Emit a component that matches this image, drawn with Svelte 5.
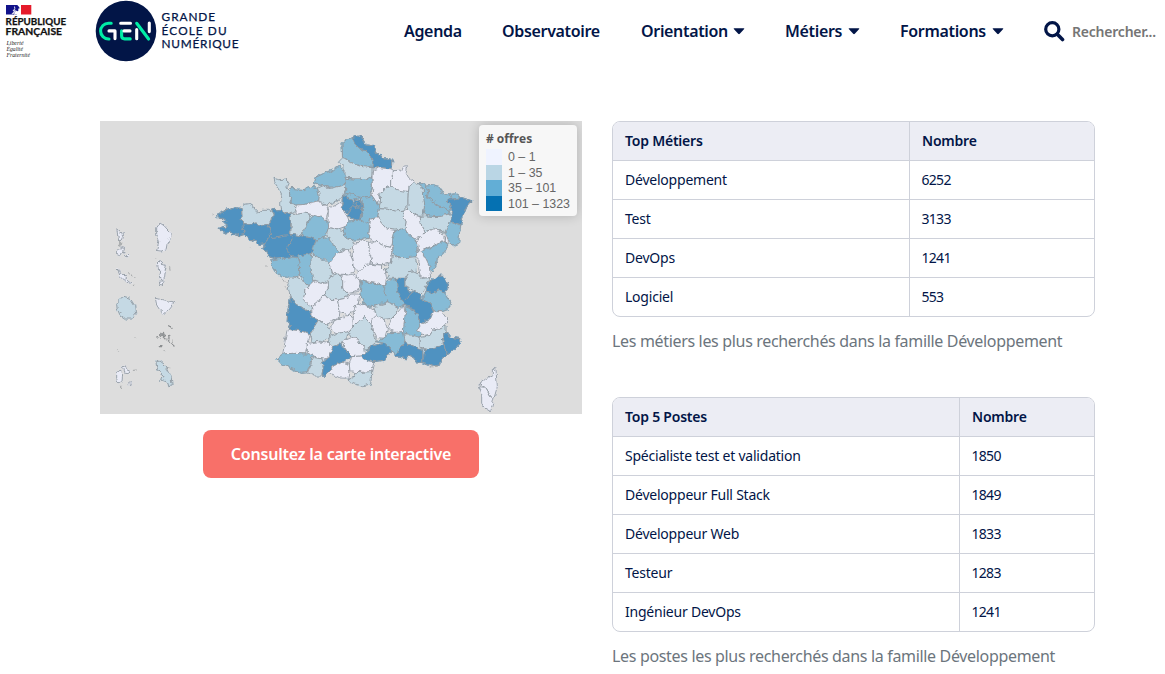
<script>
  const nav = [
    { label: 'Agenda', width: 58 },
    { label: 'Observatoire', width: 99 },
    { label: 'Orientation', width: 104, menu: true },
    { label: 'Métiers', width: 75, menu: true },
    { label: 'Formations', width: 104, menu: true }
  ];

  const tables = [
    {
      title: 'Top Métiers',
      first: 297,
      rows: [['Développement', '6252'], ['Test', '3133'], ['DevOps', '1241'], ['Logiciel', '553']],
      caption: 'Les métiers les plus recherchés dans la famille Développement'
    },
    {
      title: 'Top 5 Postes',
      first: 347,
      rows: [
        ['Spécialiste test et validation', '1850'],
        ['Développeur Full Stack', '1849'],
        ['Développeur Web', '1833'],
        ['Testeur', '1283'],
        ['Ingénieur DevOps', '1241']
      ],
      caption: 'Les postes les plus recherchés dans la famille Développement'
    }
  ];

  const legend = [
    ['#eff3ff', '0 – 1'],
    ['#bad6e5', '1 – 35'],
    ['#62aed6', '35 – 101'],
    ['#0571b2', '101 – 1323']
  ];

  const fills = { d: '#4f92c1', m: '#86bbd6', l: '#c5d9e4', p: '#e9ebf6' };

  // Department outlines, grouped by map sector. Each sector has its own origin.
  const sectors = [
    { ox: 330, oy: 12, shapes: `
d 23,267 35,262 48,256 62,252 78,248 95,252 96,275 98,295 103,302 98,310 104,328 88,332 70,328 62,318 52,326 40,320 28,310 40,305 54,304 44,296 38,290 52,288 56,282 40,280 26,280
l 95,246 105,238 122,235 132,250 146,264 160,256 176,256 190,264 188,280 178,288 172,298 155,302 138,294 120,298 98,294
d 98,302 120,298 138,295 156,302 172,299 180,315 182,338 165,356 148,358 138,348 120,346 110,334 98,325
d 186,254 195,250 200,258 215,256 225,265 240,268 244,290 240,310 242,328 225,334 205,338 182,338 180,315 172,298 190,282 190,265
d 165,356 182,338 215,332 240,330 246,345 232,370 243,382 236,400 215,400 210,408 195,400 180,396 170,378 158,370
l 192,160 205,164 232,162 234,176 228,188 238,200 242,215 240,235 250,243 260,250 254,262 246,270 226,264 215,252 212,235 216,210 206,190 196,176
m 240,190 260,192 285,194 310,184 322,190 328,212 326,228 305,232 285,238 262,240 244,238 242,218 238,200
p 256,250 262,240 285,238 305,230 326,226 335,238 350,242 355,256 350,275 354,288 342,286 330,276 310,270 290,265 262,268
l 244,270 262,268 280,264 298,268 300,280 292,300 282,320 276,334 258,330 240,328 244,300
m 300,282 310,270 330,276 348,288 356,305 350,325 340,338 318,345 300,338 280,330 284,308 294,295
d 242,332 260,330 278,335 300,340 317,346 312,365 305,385 290,392 262,394 240,392 234,372 246,345
m 310,175 315,158 340,146 370,135 385,124 402,136 408,160 406,178 402,184 380,186 355,186 330,180
l 325,185 340,182 362,190 380,186 402,182 407,196 404,204 398,212 385,222 380,232 362,235 345,236 330,225 326,205
p 352,262 358,248 375,242 390,232 396,245 402,260 412,275 416,288 405,305 385,312 362,305 352,285
l 358,308 385,312 400,318 406,334 412,342 428,345 432,365 415,375 395,374 385,380 370,365 365,345 352,335 352,318
m 318,346 340,338 358,342 368,352 372,368 382,376 380,390 368,400 358,412 352,420 335,405 322,395 308,388 312,368` },
    { ox: 720, oy: 12, shapes: `
m 6,52 20,42 38,38 46,58 60,72 78,78 92,92 98,112 96,128 80,128 62,124 45,118 28,108 8,98
d 38,40 52,34 66,32 68,46 76,60 80,66 92,62 104,66 106,84 120,88 128,102 150,102 158,110 156,132 140,130 120,128 98,130 96,112 90,90 76,78 60,74 46,62
l 5,104 20,106 40,114 62,124 98,130 96,156 80,166 60,162 40,162 18,160 12,148 12,124 -5,112
m 18,162 40,162 60,164 80,166 94,160 96,178 90,198 96,212 75,216 45,212 20,206 16,190
p 98,136 120,132 152,134 160,140 160,158 152,165 152,184 132,192 120,208 122,228 112,236 100,214 98,190 96,160
p 160,140 182,138 188,124 200,122 196,140 206,158 222,170 208,182 205,200 190,200 170,194 152,184 152,165 160,158
l 122,205 132,192 152,188 175,194 203,200 204,220 204,240 190,256 165,258 140,250 118,248 122,228
l 206,180 224,172 240,180 250,190 252,215 254,240 250,265 240,275 222,270 204,252 204,240 208,225 204,205
m 232,176 250,176 258,184 266,200 262,215 280,232 300,245 325,256 328,266 305,274 280,275 255,272 250,262 254,235 250,205 250,190
m 258,178 280,180 296,184 304,202 325,210 340,222 322,232 334,245 325,258 300,245 278,230 264,212 266,198
m 328,210 345,206 358,212 356,222 340,222
d 324,222 345,218 365,218 395,228 380,245 368,275 362,300 345,295 328,288 338,262 332,245 320,232
m 330,290 345,296 360,302 358,330 356,355 340,362 325,345 316,325 322,305
l 240,280 255,272 280,275 305,274 328,268 335,275 328,300 318,320 300,315 280,312 255,320 245,305
p 315,332 326,345 324,358 312,350
p 190,256 204,252 222,270 240,278 246,300 255,320 240,338 222,342 208,330 195,310 198,290 190,275
l 118,250 140,250 165,258 190,262 190,278 198,292 190,308 165,316 140,312 125,295 112,278
m 66,218 96,212 108,232 118,250 112,275 92,282 88,298 65,296 62,270 68,250
m 5,208 30,206 66,214 66,224 40,226 20,216
d 2,216 25,220 42,226 40,240 30,262 20,262 8,238
d 30,250 40,240 50,248 66,252 62,285 45,285 26,278
d 48,226 62,228 66,250 52,250 42,240
d 48,236 58,232 60,242 52,244
m 10,300 26,285 62,288 85,298 88,315 85,340 60,344 40,348 15,340 10,320
p 92,282 112,278 125,296 140,312 162,320 158,345 155,368 130,362 108,350 90,345 88,320
m 162,318 188,310 205,325 212,335 232,348 235,372 225,395 200,405 175,398 155,385 158,350
p 234,348 250,325 275,314 305,316 312,335 308,350 285,360 262,370 245,378 235,368
m 248,378 270,368 290,358 318,350 326,362 310,385 292,400 288,420 278,440 268,425 256,400
p 238,378 248,380 256,400 268,425 270,440 272,458 255,460 240,450 236,430 240,410 228,398
p 85,352 108,350 130,362 152,370 155,385 150,415 120,420 96,415 90,395 82,375
p 40,365 60,348 85,348 88,380 95,405 90,425 60,440 45,432 40,410 36,385` },
    { ox: 450, oy: 387, shapes: `
m 60,30 90,28 115,24 140,22 148,45 150,75 138,82 120,80 98,82 80,70 68,50
m 140,22 160,15 184,12 186,35 184,60 192,95 178,108 162,95 148,78 146,50
l 186,14 205,20 225,28 240,45 248,70 235,90 215,100 196,98 186,75 182,45
p 240,35 262,5 300,2 312,30 312,65 290,75 262,72 248,66
l 120,85 140,82 160,92 175,105 165,120 162,140 170,160 185,172 182,184 160,175 140,162 122,145 115,115
p 175,105 195,98 215,100 235,98 235,115 220,135 205,155 185,170 172,165 160,148 168,120
l 235,95 250,78 272,72 278,95 278,115 296,130 285,145 262,150 240,148 225,135 235,115
p 270,75 290,72 315,72 330,85 334,105 322,125 300,130 280,115 278,95
p 205,155 225,138 245,148 262,155 270,180 268,205 248,215 228,222 205,210 186,205 186,178
p 262,152 285,145 305,132 330,132 325,160 310,178 300,195 275,190 265,175
d 122,148 140,162 165,178 186,185 186,205 198,212 190,235 182,256 165,248 148,242 112,238 122,225 112,215 114,180
p 110,240 150,242 168,252 185,262 172,280 172,300 165,312 130,310 98,312 104,280
l 186,235 205,215 225,220 242,235 238,260 225,272 205,275 182,275 182,256
p 248,222 268,200 300,192 310,205 308,230 295,245 275,252 250,245 242,235
p 308,180 325,158 345,165 378,182 375,205 362,218 345,202 335,215 312,230 310,205
l 295,245 320,220 345,202 362,222 370,250 380,275 350,300 340,290 325,268 305,262
l 238,262 260,250 295,250 290,268 272,282 248,290 235,280
p 172,280 200,272 232,275 248,295 240,320 220,328 190,322 172,308
m 80,326 100,314 130,312 165,310 188,312 182,335 172,368 155,370 130,358 98,345
l 188,322 215,330 220,352 215,378 195,378 170,370 182,345
p 278,275 300,262 325,268 340,290 345,312 335,318 305,320 285,300
d 248,295 272,284 285,305 300,320 282,335 262,338 248,350 232,365 225,378 210,378 218,355 215,340 240,325
p 235,370 250,350 272,336 298,342 300,365 296,385 270,384
p 298,322 335,318 372,335 365,365 345,372 320,368 300,372 298,345
l 290,390 312,382 325,368 358,365 364,385 362,402 335,408 312,402` },
    { ox: 810, oy: 387, shapes: `
p -45,80 -35,60 -10,42 30,45 45,60 50,85 45,108 15,100 -25,92
m -30,95 0,100 20,105 42,110 52,135 55,158 25,160 10,170 -20,160 -32,130
m 45,108 55,92 78,85 82,110 85,135 100,155 102,165 85,172 62,160 55,150 42,125
l 48,55 62,42 68,18 92,25 120,22 135,25 140,45 138,65 115,68 105,85 75,90 52,90 58,72
d 78,92 98,84 105,108 122,132 112,150 100,152 80,130
l 105,90 112,65 138,72 155,85 182,82 168,105 160,125 150,135 135,122 105,115
d 168,108 182,95 205,76 220,76 235,108 222,130 205,120 188,132 170,122
m 160,140 172,125 188,132 205,122 225,132 242,158 235,178 215,185 190,185 180,160 158,150
l 12,165 50,160 82,172 80,190 65,205 42,208 20,195
p 5,210 20,198 42,208 52,235 45,262 20,260 10,240
p 62,205 82,185 104,165 106,200 100,245 75,248 55,232
m 108,170 130,178 145,200 152,222 140,242 155,252 150,262 125,255 100,248
d 104,155 120,138 135,120 152,138 160,152 185,162 196,200 170,208 152,218 145,195 125,172 105,165
p 155,222 180,210 195,190 220,188 235,212 215,235 190,240 178,258 158,258 145,240
l 150,265 178,258 190,242 215,238 228,225 228,245 216,265 222,285 195,292 165,298 150,290
l 98,255 120,250 150,265 150,290 158,300 135,292 105,278
m 20,268 45,262 60,248 98,250 105,270 95,295 75,318 65,300 45,280
d -22,318 5,288 40,280 68,302 45,330 15,336 -10,332
d 85,300 105,282 135,295 158,302 158,338 140,335 132,324 118,316 112,326 100,325 72,318
d 160,300 195,294 222,290 230,315 215,325 208,345 185,348 162,340
d 216,262 228,248 240,262 272,266 268,282 245,305 230,308 218,290
p 326,402 350,385 370,375 370,355 378,358 382,410 372,445 362,440 345,412 330,408
p 328,410 345,412 362,440 372,448 362,485 345,475 335,460 335,430` },
    { ox: 0, oy: 282, shapes: `
p 50,42 58,44 58,52 70,58 70,68 66,76 56,78 54,66 52,54
p 50,110 62,98 74,100 70,112 58,122 50,118
p 76,122 82,116 87,120 82,126
p 52,162 62,172 80,192 96,204 90,208 74,196 60,182
l 50,265 62,250 72,244 90,250 104,272 107,298 98,312 78,312 60,300 52,282
p 170,38 180,24 192,32 214,56 210,70 202,84 198,104 184,108 170,106 176,80 170,60
p 170,148 178,140 188,148 200,152 196,166 194,186 186,194 178,188 182,166 172,158
p 178,198 192,198 190,210 180,208
p 166,250 196,256 225,262 208,284 192,298 180,286 170,270
p 50,468 60,466 68,480 66,500 56,504 50,492
p 68,456 76,452 80,464 92,470 84,476 72,474
p 86,502 92,500 94,508 88,512
l 168,440 180,438 198,452 206,468 214,488 216,510 206,512 204,502 182,494 186,484 196,486 180,472 170,456` }
  ];

  // Merge vertices that fall close together so that neighbours share a border.
  const anchors = [];
  function snap(x, y) {
    for (const a of anchors) {
      if (Math.hypot(a[0] - x, a[1] - y) < 7.5) return a;
    }
    const a = [x, y];
    anchors.push(a);
    return a;
  }
  const shapes = sectors.flatMap((s) =>
    s.shapes.trim().split('\n').map((line) => {
      const [tone, ...pts] = line.trim().split(' ');
      const out = pts.map((p) => {
        const [x, y] = p.split(',').map(Number);
        return s.ox ? snap(x + s.ox, y + s.oy) : [x, y + s.oy];
      });
      return { fill: fills[tone], points: out.map((p) => p.join(',')).join(' ') };
    })
  );
</script>

<header>
  <svg class="rf" width="70" height="60" viewBox="0 0 70 60" aria-label="République Française">
    <rect x="6" y="5" width="11" height="9.5" fill="#11128a" />
    <rect x="14" y="5" width="8" height="9.5" fill="#fff" />
    <rect x="21" y="5" width="10.3" height="9.5" fill="#e51b2b" />
    <path d="M12 5h5.3l2 2.2.2 1.4-1.5.2.6 1.4-1 1-1.8-.4-2 3.7H11l3.5-3.2-1.8-.4 2.8-2.2-2-.4 2-1z" fill="#11128a" />
    <path d="M13.2 9.7 16 8.5l-1.8 1.8 2.4.2-3.4 4H11l3-3.3-1.4-.2z" fill="#d7d8e9" />
    <g class="rfb">
      <text x="5.6" y="25.3" textLength="60.5" lengthAdjust="spacingAndGlyphs">RÉPUBLIQUE</text>
      <text x="5.6" y="35" textLength="56.5" lengthAdjust="spacingAndGlyphs">FRANÇAISE</text>
    </g>
    <g class="rfi">
      <text x="6.5" y="44.7" textLength="17" lengthAdjust="spacingAndGlyphs">Liberté</text>
      <text x="6.5" y="51" textLength="16.5" lengthAdjust="spacingAndGlyphs">Égalité</text>
      <text x="6.5" y="57" textLength="23.5" lengthAdjust="spacingAndGlyphs">Fraternité</text>
    </g>
  </svg>
  <svg class="gen" width="150" height="62" viewBox="92 0 150 62" aria-label="Grande École du Numérique">
    <circle cx="126" cy="31" r="30.3" fill="#021547" />
    <g fill="none" stroke-width="3.1" stroke-linecap="round" stroke-linejoin="round">
      <path stroke="#00eda6" d="M111.2 23.2H108.5A7.9 7.9 0 0 0 108.5 39H109M121.6 30.8V35.8Q121.6 38.9 124.7 38.9H130.2M136.7 23.3 148.6 39" />
      <path stroke="#fff" d="M109 30.9H115V38.6M120.7 23.3H130.5M124 30.9H130M136.7 29.6V38.8M149.3 23.1V31.6" />
    </g>
    <g class="gent">
      <text x="161.6" y="21.4" textLength="53.5">GRANDE</text>
      <text x="161.6" y="35" textLength="65">ÉCOLE DU</text>
      <text x="161.6" y="48.4" textLength="77">NUMÉRIQUE</text>
    </g>
  </svg>
  <nav>
    {#each nav as item}
      <a style="width: {item.width}px">
        <span>{item.label}</span>
        {#if item.menu}<svg width="12" height="7" viewBox="0 0 12 7"><path d="M1.3.2h9.4q1 0 .5.9L6.8 5.8q-.8.8-1.6 0L.8 1.1Q.2.2 1.3.2z" fill="#021547" /></svg>{/if}
      </a>
    {/each}
  </nav>
  <div class="search">
    <svg width="21" height="21" viewBox="0 0 21 21" fill="none" stroke="#021547"><circle cx="8.3" cy="8.3" r="6.6" stroke-width="3.2" /><path d="m13.3 13.3 5.2 5.2" stroke-width="3.6" stroke-linecap="round" /></svg>
    <span>Rechercher...</span>
  </div>
</header>

<main>
  <section class="left">
    <div class="map">
      <svg width="482" height="293" viewBox="0 0 1446 879">
        <filter id="coast" x="0" y="0" width="100%" height="100%" color-interpolation-filters="sRGB">
          <feTurbulence type="fractalNoise" baseFrequency="0.07" numOctaves="2" seed="4" />
          <feDisplacementMap in="SourceGraphic" scale="15" xChannelSelector="R" yChannelSelector="G" />
        </filter>
        <g filter="url(#coast)" stroke-linejoin="round">
          {#each shapes as s}<polygon points={s.points} fill={s.fill} stroke={s.fill} stroke-width="4" />{/each}
          {#each shapes as s}<polygon points={s.points} fill={s.fill} stroke="#929ba2" stroke-width="2.8" />{/each}
          <g fill="none" stroke="#a3a6a8" stroke-width="3" stroke-linecap="round">
            <path d="M58 358V376M62 358V376M50 322 55 326M86 455 88 459M96 461 99 465M107 472h1M100 493h1M209 440 210 448M168 410h1M108 650h1M52 690h1M100 751 109 750M64 796h2M198 742 210 738M195 692h1" />
            <path stroke="#8b8e90" stroke-width="4" d="M206 614 213 622M170 648 180 652M182 640 188 646 194 640M190 650 200 652M196 656 208 664M206 646 207 654M212 664 222 672M218 656v4M176 674h10M188 636v4" />
            <path d="M336 282h2M450 382h2M497 435h2M545 478l12 2 7 7M556 497l8 8M990 738h6M1006 739h6" />
          </g>
        </g>
      </svg>
      <div class="legend">
        <b># offres</b>
        {#each legend as [color, range]}
          <div class="key"><i style="background: {color}"></i><span>{range}</span></div>
        {/each}
      </div>
    </div>
    <a class="cta">Consultez la carte interactive</a>
  </section>
  <section class="right">
    {#each tables as t}
      <div class="block">
        <div class="frame">
          <div class="row head"><span class="first" style="width: {t.first}px">{t.title}</span><span>Nombre</span></div>
          {#each t.rows as [name, count]}
            <div class="row"><span class="first" style="width: {t.first}px">{name}</span><span class="num">{count}</span></div>
          {/each}
        </div>
        <p>{t.caption}</p>
      </div>
    {/each}
  </section>
</main>

<style>
  :global(body) { margin: 0; background: #fff; overflow: hidden; }
  header, main { font-family: "Noto Sans", "Open Sans", sans-serif; color: #021547; }
  header { display: flex; height: 62px; width: 1165px; }
  .rf { flex: none; }
  .gen { flex: none; margin-left: 22px; }
  .rfb { font: 700 9.6px Lato, sans-serif; fill: #111; stroke: #111; stroke-width: 0.25px; }
  .rfi { font: italic 6.4px "Liberation Serif", serif; fill: #222; }
  .gent { font: 400 11.8px Lato, Inter, sans-serif; fill: #021547; stroke: #021547; stroke-width: 0.25px; }
  nav { display: flex; gap: 40px; margin-left: 162px; align-items: center; }
  nav a { display: flex; justify-content: space-between; align-items: center; font-size: 16px; font-weight: 600; white-space: nowrap; letter-spacing: -0.33px; line-height: 24px; }
  nav a svg { flex: none; }
  .search { display: flex; align-items: center; gap: 7px; margin-left: 40px; font-size: 14px; font-weight: 600; color: #757575; white-space: nowrap; letter-spacing: -0.22px; }
  .search svg { margin-right: 0; }
  main { display: flex; gap: 30px; padding: 59px 70px 0 100px; }
  .left { width: 482px; display: flex; flex-direction: column; align-items: center; }
  .map { position: relative; width: 482px; height: 293px; background: #ddd; overflow: hidden; }
  .map > svg { display: block; }
  .legend { position: absolute; left: 379px; top: 4px; width: 91px; height: 83px; padding: 4px 0 4px 7px; background: #f7f7f7; border-radius: 4px; box-shadow: 0 0 12px rgba(0, 0, 0, 0.2); font-family: "Liberation Sans", Arial, sans-serif; font-size: 12.4px; color: #666; }
  .legend b { display: block; height: 20px; line-height: 19px; font-family: "Open Sans", sans-serif; color: #555; font-size: 12px; }
  .key { display: flex; height: 15.5px; line-height: 16px; white-space: nowrap; }
  .key i { width: 16px; margin-right: 6px; }
  .cta { display: flex; margin-top: 16px; width: 276px; height: 48px; border-radius: 8px; background: #f87069; color: #fff; font-size: 16px; font-weight: 600; align-items: center; justify-content: center; letter-spacing: -0.21px; white-space: nowrap; }
  .right { width: 483px; display: flex; flex-direction: column; gap: 44px; }
  .frame { box-sizing: border-box; width: 483px; border: 1px solid #ced1da; border-radius: 8px; overflow: hidden; }
  .row { display: flex; height: 38px; line-height: 38px; font-size: 14px; letter-spacing: -0.22px; white-space: nowrap; }
  .row + .row { border-top: 1px solid #ced1da; }
  .row span { padding-left: 12px; }
  .row .first { box-sizing: border-box; border-right: 1px solid #ced1da; }
  .row .num { padding-left: 11.5px; letter-spacing: -0.7px; }
  .head { background: #ecedf4; font-weight: 600; }
  p { margin: 12px 0 0; height: 24px; line-height: 24px; font-size: 16px; letter-spacing: -0.33px; color: #6c757d; white-space: nowrap; }
</style>
